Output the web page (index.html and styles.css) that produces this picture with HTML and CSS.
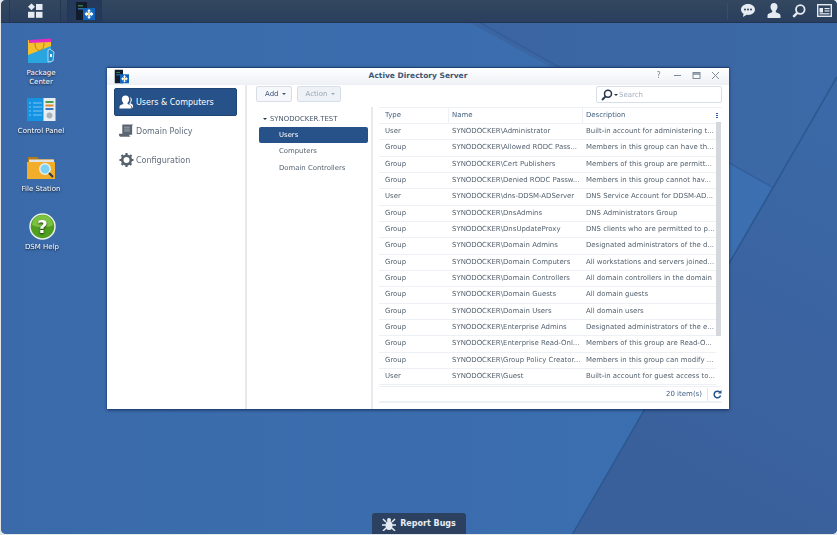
FILE: index.html
```html
<!DOCTYPE html>
<html lang="en">
<head>
<meta charset="utf-8">
<title>Active Directory Server</title>
<link rel="stylesheet" href="styles.css">
</head>
<body>
<div class="screen">
  <svg class="wallpaper" width="837" height="535" viewBox="0 0 837 535">
    <defs>
      <linearGradient id="wl" x1="0" y1="0" x2="1" y2="0"><stop offset="0" stop-color="#3a6aa9"/><stop offset="1" stop-color="#3c70b2"/></linearGradient>
      <linearGradient id="wt" x1="0" y1="0" x2="1" y2="0"><stop offset="0" stop-color="#3a65a2"/><stop offset="1" stop-color="#3c69a7"/></linearGradient>
      <linearGradient id="wr" x1="1" y1="0" x2="0.700" y2="1"><stop offset="0" stop-color="#3b69a8"/><stop offset="1" stop-color="#3a609b"/></linearGradient>
    </defs>
    <rect width="837" height="535" fill="url(#wl)"/>
    <polygon points="470,23 837,23 837,77 772,187" fill="url(#wt)"/>
    <polygon points="837,77 837,535 572,535 772,187" fill="url(#wr)"/>
    <path d="M470 17L772 187" stroke="#2f5a94" stroke-width="1.500" opacity=".6"/>
    <path d="M837 77L572 535" stroke="#2c5890" stroke-width="1.500"/>
  </svg>
  <header class="taskbar">
    <div class="task-left">
      <div class="task-btn menu-btn">
        <svg width="18" height="16" viewBox="0 0 18 16"><path class="ti" d="M5.500 .5L9 3.800 5.500 7.200 2 3.800z"/><rect class="ti" x="10" y="1" width="6.500" height="6"/><rect class="ti" x="2" y="8.800" width="6.500" height="6"/><rect class="ti" x="10" y="8.800" width="6.500" height="6"/></svg>
      </div>
      <div class="task-btn app-btn">
        <svg width="20" height="18" viewBox="0 0 20 18"><rect x="1" y="0" width="11" height="18" fill="#121c2c"/><rect x="3" y="3" width="5" height="1.500" fill="#3b7a3e"/><rect x="3" y="6" width="6" height="1.500" fill="#2f6fae"/><rect x="8" y="6" width="12" height="12" fill="#1265bd"/><path d="M14 7l2 2.200h-1.300v1.600h1.500V9.500l2.200 2.500-2.200 2.500v-1.300h-1.500v1.600H16L14 17l-2-2.200h1.300v-1.600h-1.500v1.300L9.600 12l2.200-2.500v1.300h1.500V9.200H12z" fill="#fff"/><rect x="13" y="11" width="2" height="2" fill="#f1dc6a"/></svg>
      </div>
    </div>
    <div class="task-right">
      <svg width="16" height="15" viewBox="0 0 16 15"><path class="ti" d="M8 1C3.800 1 1 3.500 1 6.500c0 1.800 1 3.300 2.500 4.300L3 14l3.700-2.200c.4 0 .9.100 1.300.100 4.200 0 7-2.400 7-5.400S12.200 1 8 1z"/><circle cx="5" cy="6.500" r="1" fill="#2c405e"/><circle cx="8" cy="6.500" r="1" fill="#2c405e"/><circle cx="11" cy="6.500" r="1" fill="#2c405e"/></svg>
      <svg width="14" height="15" viewBox="0 0 14 15"><path class="ti" d="M7 0c2.200 0 3.500 1.700 3.500 3.800 0 1.700-.8 3.200-1.700 4v1.500c1.500.8 4.700 1.300 4.700 3.400V15H.5v-2.300c0-2.100 3.200-2.600 4.700-3.400V7.800c-.9-.8-1.700-2.300-1.700-4C3.500 1.700 4.800 0 7 0z"/></svg>
      <svg width="14" height="14" viewBox="0 0 14 14"><circle cx="8.300" cy="5.500" r="4.300" fill="none" stroke="#e6ebf1" stroke-width="1.800"/><path d="M5.200 8.800L1.300 12.800" stroke="#e6ebf1" stroke-width="2.400"/></svg>
      <svg width="15" height="13" viewBox="0 0 15 13"><rect x=".7" y=".7" width="13.600" height="11.600" fill="none" stroke="#e6ebf1" stroke-width="1.400"/><rect x="2.500" y="4" width="3.500" height="4.500" class="ti"/><rect x="7.500" y="4" width="5" height="1.200" class="ti"/><rect x="7.500" y="6.400" width="5" height="1.200" class="ti"/><rect x="2.500" y="9.200" width="10" height="1.200" class="ti"/></svg>
    </div>
  </header>

  <a class="desk-icon pos-package">
    <svg width="28" height="27" viewBox="0 0 28 27"><path d="M1 2h23v23H1z" fill="#f5c02c"/><path d="M1 25V17L24 8v17z" fill="#2aa5df"/><path d="M2 2L24 .5V4L2 5z" fill="#e32bc4"/><path d="M8 5c0 10 9 10 9 0" fill="none" stroke="#a9802a" stroke-width="1"/><path d="M21 12l2-1 4 3-1 9-5 1z" fill="#1d8ed0" stroke="#eaf5fb" stroke-width=".7"/><path d="M23 16h2v3h-2z" fill="#eaf5fb"/></svg>
    <span>Package<br>Center</span>
  </a>
  <a class="desk-icon pos-control">
    <svg width="29" height="24" viewBox="0 0 29 24"><rect width="17" height="23" fill="#1493e3"/><rect x="16.500" width="12" height="23" fill="#e8edf1"/><rect x="18.500" y="3" width="8" height="2" fill="#4aa04a"/><rect x="18.500" y="6.500" width="8" height="2" fill="#e08a2c"/><rect x="18.500" y="10" width="8" height="2" fill="#3a78c2"/><circle cx="22.500" cy="17.500" r="3" fill="#aab3bb"/><path d="M6 5h9M6 9h9M6 13h9M6 17h9M2 5h2M2 9h2M2 13h2M2 17h2" stroke="#7cc6f2"/></svg>
    <span>Control Panel</span>
  </a>
  <a class="desk-icon pos-file">
    <svg width="29" height="25" viewBox="0 0 29 25"><path d="M1 1h9l2 2h14v8H1z" fill="#b27a18"/><rect x="2" y="3.500" width="25" height="5" fill="#dfe3e6"/><path d="M0 6h28v17H0z" fill="#f2ae2a"/><circle cx="18" cy="13" r="5.200" fill="#7cd2f4" stroke="#e8eef2" stroke-width="1.500"/><path d="M22 17l4 4" stroke="#27384e" stroke-width="2"/></svg>
    <span>File Station</span>
  </a>
  <a class="desk-icon pos-help">
    <svg width="27" height="27" viewBox="0 0 27 27"><circle cx="13.500" cy="13.500" r="12.500" fill="#4f9e1f" stroke="#e9f0e8" stroke-width="1.500"/><path d="M3 12a10.500 10 0 0 1 21 0c-5 3-15 3-21 0z" fill="#7cc242"/><text class="help-q" x="13.500" y="20">?</text></svg>
    <span>DSM Help</span>
  </a>

  <section class="window">
    <div class="titlebar">
      <svg class="title-icon" width="15" height="15" viewBox="0 0 20 18"><rect x="1" y="0" width="11" height="18" fill="#121c2c"/><rect x="3" y="3" width="5" height="1.500" fill="#3b7a3e"/><rect x="3" y="6" width="6" height="1.500" fill="#2f6fae"/><rect x="8" y="6" width="12" height="12" fill="#1265bd"/><path d="M14 7l2 2.200h-1.300v1.600h1.500V9.500l2.200 2.500-2.200 2.500v-1.300h-1.500v1.600H16L14 17l-2-2.200h1.300v-1.600h-1.500v1.300L9.600 12l2.200-2.500v1.300h1.500V9.200H12z" fill="#fff"/><rect x="13" y="11" width="2" height="2" fill="#f1dc6a"/></svg>
      <div class="title-text">Active Directory Server</div>
      <div class="win-controls">
        <span class="q">?</span>
        <svg width="9" height="9" viewBox="0 0 9 9"><path d="M1 4.500h7" stroke="#7d8a99"/></svg>
        <svg width="9" height="9" viewBox="0 0 9 9"><rect x="1" y="1.500" width="7" height="6" fill="none" stroke="#7d8a99"/><path d="M1 3h7" stroke="#7d8a99" stroke-width="1.500"/></svg>
        <svg width="9" height="9" viewBox="0 0 9 9"><path d="M1 1l7 7M8 1L1 8" stroke="#7d8a99"/></svg>
      </div>
    </div>
    <div class="win-body">
      <nav class="sidebar">
        <div class="side-item active">
          <svg width="15" height="15" viewBox="0 0 16 15"><path fill="#fff" d="M7 0c2.500 0 3.800 1.700 3.800 4 0 1.700-.8 3-1.700 3.900v1.300c1.800.7 4.100 1.100 4.100 3V14H.5v-1.800c0-1.900 2.400-2.300 4.100-3V7.900C3.700 7 3 5.700 3 4c0-2.300 1.500-4 4-4z"/><path fill="#fff" d="M11.500 1.500c1.600.5 2.200 1.700 2.200 3.100 0 1.300-.6 2.400-1.300 3v1c1.200.5 2.600.9 2.600 2.500V13h-.8c0-1.700-1.600-2.800-3-3.300V8.300c.8-.9 1.300-2.300 1.300-3.900 0-1.100-.3-2.100-1-2.900z"/></svg>
          <span>Users &amp; Computers</span>
        </div>
        <div class="side-item">
          <svg width="15" height="14" viewBox="0 0 16 14"><path d="M3.500 0h11.500l-1 1.500V11H3.500z" fill="#5b6672"/><path d="M0 10h11v1.500c0 1 .7 1.500 1.500 1.500H1.500C.7 13 0 12 0 11z" fill="#5b6672"/><path d="M5.500 3h6M5.500 5h6M5.500 7h6" stroke="#aeb5bc" stroke-width=".8"/></svg>
          <span>Domain Policy</span>
        </div>
        <div class="side-item">
          <svg width="15" height="14" viewBox="-.5 0 15 14"><circle cx="7" cy="7" r="4.300" fill="none" stroke="#56616d" stroke-width="2.600"/><path d="M7 0v14M0 7h14M2 2l10 10M12 2L2 12" stroke="#56616d" stroke-width="2.200" stroke-dasharray="2 10"/></svg>
          <span>Configuration</span>
        </div>
      </nav>
      <div class="main">
        <div class="toolbar">
          <div class="btn">Add <i class="caret"></i></div>
          <div class="btn disabled">Action <i class="caret"></i></div>
          <div class="search">
            <svg width="12" height="12" viewBox="0 0 12 12"><circle cx="7" cy="4.800" r="3.500" fill="none" stroke="#26364a" stroke-width="1.500"/><path d="M4.500 7.500L1 11" stroke="#26364a" stroke-width="1.800"/></svg>
            <i class="caret dark"></i>
            <span>Search</span>
          </div>
        </div>
        <div class="panes">
          <div class="tree">
            <div class="tree-root"><i class="caret dark"></i>SYNODOCKER.TEST</div>
            <div class="tree-item selected">Users</div>
            <div class="tree-item">Computers</div>
            <div class="tree-item">Domain Controllers</div>
          </div>
          <div class="grid-pane">
            <div class="grid">
              <div class="row head"><div>Type</div><div>Name</div><div>Description</div><b class="kebab"></b></div>
              <div class="row"><div>User</div><div>SYNODOCKER\Administrator</div><div>Built-in account for administering t...</div></div>
              <div class="row"><div>Group</div><div>SYNODOCKER\Allowed RODC Pass...</div><div>Members in this group can have th...</div></div>
              <div class="row"><div>Group</div><div>SYNODOCKER\Cert Publishers</div><div>Members of this group are permitt...</div></div>
              <div class="row"><div>Group</div><div>SYNODOCKER\Denied RODC Passw...</div><div>Members in this group cannot hav...</div></div>
              <div class="row"><div>User</div><div>SYNODOCKER\dns-DDSM-ADServer</div><div>DNS Service Account for DDSM-AD...</div></div>
              <div class="row"><div>Group</div><div>SYNODOCKER\DnsAdmins</div><div>DNS Administrators Group</div></div>
              <div class="row"><div>Group</div><div>SYNODOCKER\DnsUpdateProxy</div><div>DNS clients who are permitted to p...</div></div>
              <div class="row"><div>Group</div><div>SYNODOCKER\Domain Admins</div><div>Designated administrators of the d...</div></div>
              <div class="row"><div>Group</div><div>SYNODOCKER\Domain Computers</div><div>All workstations and servers joined...</div></div>
              <div class="row"><div>Group</div><div>SYNODOCKER\Domain Controllers</div><div>All domain controllers in the domain</div></div>
              <div class="row"><div>Group</div><div>SYNODOCKER\Domain Guests</div><div>All domain guests</div></div>
              <div class="row"><div>Group</div><div>SYNODOCKER\Domain Users</div><div>All domain users</div></div>
              <div class="row"><div>Group</div><div>SYNODOCKER\Enterprise Admins</div><div>Designated administrators of the e...</div></div>
              <div class="row"><div>Group</div><div>SYNODOCKER\Enterprise Read-Onl...</div><div>Members of this group are Read-O...</div></div>
              <div class="row"><div>Group</div><div>SYNODOCKER\Group Policy Creator...</div><div>Members in this group can modify ...</div></div>
              <div class="row"><div>User</div><div>SYNODOCKER\Guest</div><div>Built-in account for guest access to...</div></div>
              <div class="scrollbar"></div>
            </div>
            <div class="grid-foot">
              <span>20 item(s)</span>
              <svg width="9" height="9" viewBox="0 0 9 9"><path d="M7.600 5.500A3.300 3.300 0 1 1 7 2.300" fill="none" stroke="#24558f" stroke-width="1.500"/><path d="M8.500 0v3.500H5z" fill="#24558f"/></svg>
            </div>
          </div>
        </div>
      </div>
    </div>
  </section>

  <div class="report">
    <svg width="14" height="14" viewBox="0 0 14 14"><ellipse cx="7" cy="8.500" rx="3.500" ry="4.500" fill="#e6ecf3"/><circle cx="7" cy="3" r="2" fill="#e6ecf3"/><path d="M1 2l3 3M13 2l-3 3M0 8h4M14 8h-4M1 14l3-3M13 14l-3-3" stroke="#e6ecf3" stroke-width="1.500"/></svg>
    <span>Report Bugs</span>
  </div>
</div>
</body>
</html>
```
FILE: styles.css
```css
* { box-sizing: border-box; }
html, body { margin: 0; height: 100%; }
body { background: #e4e6e8; overflow: hidden; font-family: "DejaVu Sans", sans-serif; }

.screen {
  position: relative;
  width: 836px;
  height: 534px;
  margin-left: 1px;
  overflow: hidden;
  border-radius: 5px;
  background: #3b6cac;
  filter: blur(.3px);
}
.wallpaper { position: absolute; left: -1px; top: 0; }

/* taskbar */
.taskbar {
  position: relative;
  height: 23px;
  display: flex;
  justify-content: space-between;
  background: linear-gradient(180deg, #33475f 0%, #2a3f5e 100%);
  border-bottom: 1px solid #22344f;
}
.task-left { display: flex; padding-left: 8px; }
.task-btn { display: flex; align-items: center; justify-content: center; height: 22px; border-right: 1px solid #243750; }
.menu-btn { width: 52px; border-left: 1px solid #243750; }
.app-btn { width: 35px; margin-left: 6px; background: #25395a; border-left: 1px solid #243750; }
.task-right { display: flex; align-items: center; gap: 11px; padding-right: 5px; padding-bottom: 1px; }
.task-right::before { content: ""; width: 1px; height: 16px; background: #3b4f6a; margin-right: 1px; }
.ti { fill: #e6ebf1; }

/* desktop icons */
.desk-icon {
  position: absolute;
  width: 80px;
  display: flex;
  flex-direction: column;
  align-items: center;
  color: #fff;
  font-size: 7px;
  line-height: 9px;
  text-align: center;
  text-shadow: 0 1px 2px rgba(0,0,0,.8);
}
.pos-package { left: 0; top: 38px; gap: 3.500px; }
.pos-control { left: 0; top: 98px; gap: 5px; }
.pos-file { left: 0; top: 156px; gap: 4px; }
.pos-help { left: 1px; top: 213px; gap: 3px; }
.help-q { fill: #fff; font: bold 18px "DejaVu Sans", sans-serif; text-anchor: middle; }

/* window */
.window {
  position: absolute;
  left: 106px;
  top: 67px;
  width: 622px;
  height: 342px;
  display: flex;
  flex-direction: column;
  background: #fff;
  border-top: 1px solid #1d4274;
  box-shadow: 0 1px 3px rgba(10,30,70,.8);
}
.titlebar {
  position: relative;
  height: 17px;
  flex: none;
  background: linear-gradient(180deg, #fff 0%, #edf0f5 100%);
}
.title-icon { position: absolute; left: 7px; top: 1px; }
.title-text {
  text-align: center;
  font-size: 7.500px;
  line-height: 16px;
  font-weight: bold;
  color: #3d5673;
}
.win-controls {
  position: absolute;
  right: 9px;
  top: 3px;
  display: flex;
  align-items: center;
  gap: 10px;
}
.q { width: 9px; font-size: 8px; line-height: 9px; color: #7d8a99; text-align: center; }
.win-body { flex: 1; display: flex; min-height: 0; }

.sidebar {
  width: 138px;
  flex: none;
  padding: 3px 8px 0 7px;
  display: flex;
  flex-direction: column;
  gap: 1px;
}
.side-item {
  height: 28px;
  display: flex;
  align-items: center;
  gap: 2px;
  padding: 1px 0 0 4px;
  font-size: 8px;
  color: #5f6c7a;
  border-radius: 2px;
  border: 1px solid transparent;
}
.side-item svg { flex: none; margin-top: -1px; }
.side-item.active { background: #275289; color: #fff; border-color: #1f4575; }
.main {
  flex: 1;
  min-width: 0;
  display: flex;
  flex-direction: column;
  border-left: 2px solid #e7e9ec;
}

.toolbar {
  height: 22px;
  flex: none;
  display: flex;
  align-items: flex-start;
  gap: 5px;
  padding: 1px 7px 0 9px;
}
.btn {
  height: 16px;
  padding: 0 5px 0 8px;
  display: flex;
  align-items: center;
  gap: 3px;
  font-size: 7px;
  color: #3e5575;
  background: #f5f7fa;
  border: 1px solid #d6dee8;
  border-radius: 2px;
}
.btn.disabled { color: #9aa7b7; background: #eef1f5; }
.caret {
  display: inline-block;
  width: 0;
  height: 0;
  border: 2px solid transparent;
  border-top: 2.500px solid currentColor;
  border-bottom: 0;
}
.caret.dark { color: #26364a; }
.search {
  margin-left: auto;
  width: 126px;
  height: 17px;
  display: flex;
  align-items: center;
  gap: 1px;
  padding-left: 4px;
  background: #fff;
  border: 1px solid #d6dee8;
  border-radius: 2px;
  font-size: 7px;
  color: #a3afbd;
}

.panes { flex: 1; display: flex; min-height: 0; }
.tree { width: 126px; flex: none; border-right: 2px solid #e7e9ec; padding: 3px 3px 0 12px; color: #55626f; font-size: 6.900px; }
.tree-root { height: 17px; display: flex; align-items: center; gap: 3px; padding-left: 4px; color: #47566a; }
.tree-item { height: 16.300px; line-height: 16.300px; padding-left: 20px; }
.tree-item.selected { background: #275289; color: #fff; border-radius: 2px; }

.grid-pane { flex: 1; min-width: 0; padding: 0 7px 5px 0; display: flex; flex-direction: column; }
.grid { position: relative; flex: none; }
.row {
  display: grid;
  grid-template-columns: 69px 134px 1fr;
  height: 16.330px;
  line-height: 15.500px;
  font-size: 6.950px;
  color: #55626f;
  border-bottom: 1px solid #edf1f6;
  margin: 0 6px;
  white-space: nowrap;
}
.row > div { padding-left: 4px; overflow: hidden; }
.row > div:first-child { padding-left: 6px; }
.head { color: #43607f; margin-right: 0; position: relative; border-top: 1px solid #edf1f6; height: 17px; }
.head > div + div { border-left: 1px solid #edf1f6; padding-left: 3px; }
.kebab {
  position: absolute;
  right: 4px;
  top: 5px;
  width: 2px;
  height: 5px;
  background: repeating-linear-gradient(180deg, #2c5a94 0 1.500px, transparent 1.500px 2px);
}
.scrollbar { position: absolute; right: 1px; top: 15px; width: 5px; height: 214px; background: #d4d7db; }
.grid-foot {
  margin: 1px 0 0 6px;
  height: 17px;
  display: flex;
  align-items: center;
  justify-content: flex-end;
  gap: 10px;
  font-size: 7px;
  color: #3e5f88;
  border-top: 1px solid #edf1f6;
  border-bottom: 2px solid #edf1f6;
}
.grid-foot span { padding-right: 5px; margin-right: -5px; border-right: 1px solid #e2e8ef; line-height: 13px; }

.report {
  position: absolute;
  left: 371px;
  bottom: 0;
  width: 94px;
  height: 21px;
  display: flex;
  align-items: center;
  justify-content: center;
  gap: 4px;
  background: #2c4160;
  border-radius: 3px 3px 0 0;
  color: #e6ecf3;
  font-size: 8px;
  font-weight: bold;
}
```
